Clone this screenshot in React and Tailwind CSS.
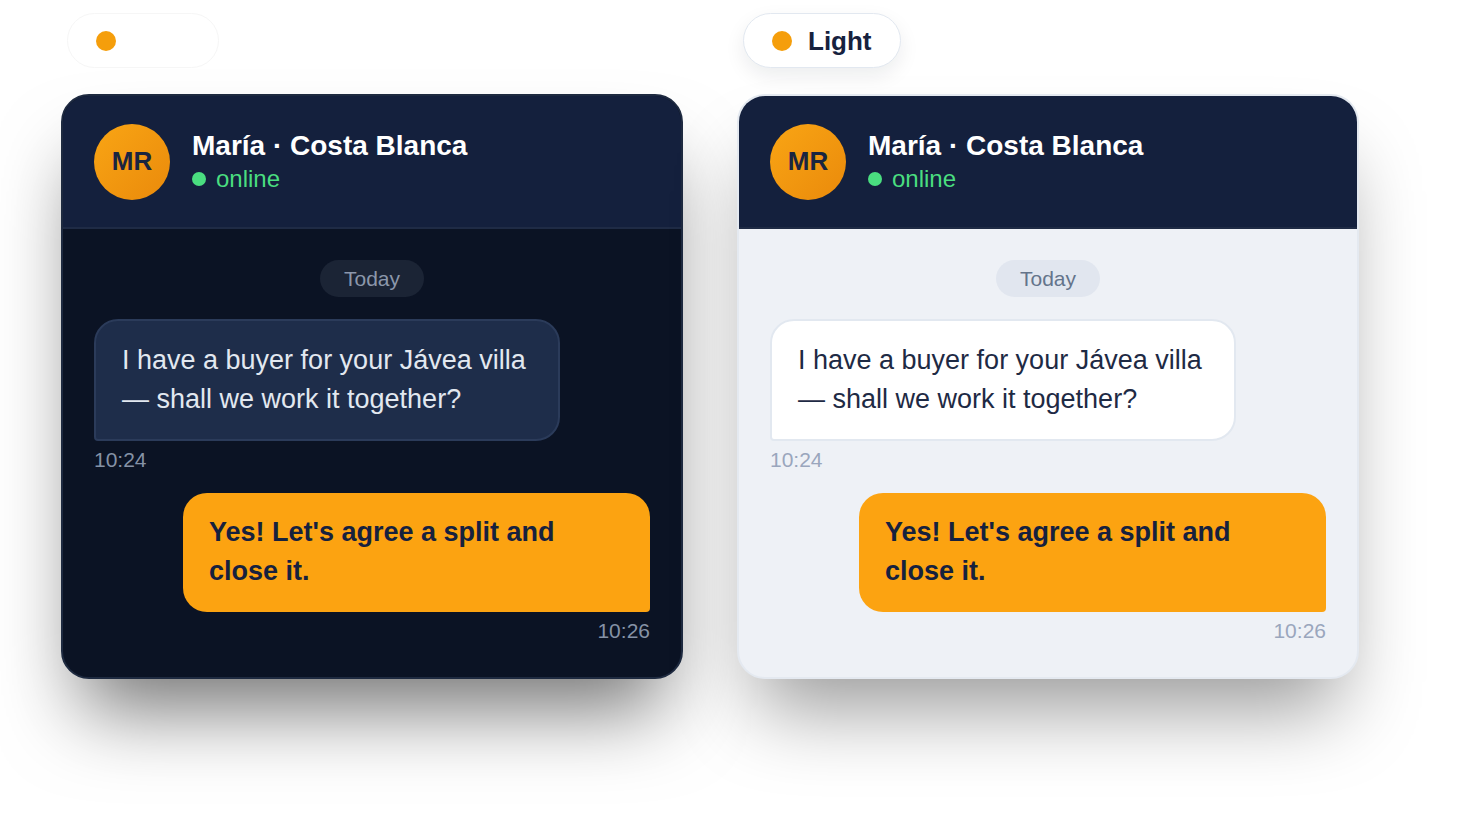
import React from "react";

const themes = {
  dark: {
    label: "Dark",
    pill: "bg-white border-[#f6f6f6] text-white",
    card: "border-2 border-[#1e2a40] bg-[#0b1324] shadow-[0_50px_80px_-20px_rgba(0,0,0,0.55)]",
    today: "bg-[#1b2435] text-[#8b97ab]",
    incoming: "bg-[#1e2d4a] border-[#2b3b5a] text-[#e2e8f0]",
    time: "text-[#8592a6]",
  },
  light: {
    label: "Light",
    pill: "bg-white border-[#e2e8f0] text-[#16213e] shadow-[0_8px_20px_rgba(15,23,42,0.08)]",
    card: "border-2 border-[#e4e9f0] bg-[#eef1f6] shadow-[0_50px_80px_-20px_rgba(0,0,0,0.4)]",
    today: "bg-[#e1e6ef] text-[#64748b]",
    incoming: "bg-white border-[#e2e8f0] text-[#1e2a44]",
    time: "text-[#9aa6bd]",
  },
};

const ChatPreview = ({ theme }) => {
  const t = themes[theme];

  return (
    <div className="flex flex-col items-start w-[622px]">
      {/* Theme pill */}
      <div className={`ml-[6px] h-[55px] flex items-center gap-4 px-7 rounded-full border ${t.pill}`}>
        <span className="w-5 h-5 rounded-full bg-[#f59e0b]" />
        <span className="text-[26px] font-bold leading-none">{t.label}</span>
      </div>

      {/* Card */}
      <div className={`mt-[26px] w-full rounded-[28px] overflow-hidden ${t.card}`}>
        {/* Header */}
        <div className="bg-[#14203d] border-b-2 border-[#1f2b45] h-[133px] px-[31px] flex items-center gap-[22px]">
          <div className="w-[76px] h-[76px] rounded-full bg-gradient-to-br from-[#f9a514] to-[#ea8a0b] flex items-center justify-center">
            <span className="text-[26px] font-bold text-[#1a2540]">MR</span>
          </div>
          <div className="flex flex-col">
            <span className="text-[28px] font-bold text-white leading-[34px]">María · Costa Blanca</span>
            <span className="flex items-center gap-[10px] text-[24px] text-[#4ade80] leading-[32px]">
              <span className="w-[14px] h-[14px] rounded-full bg-[#4ade80]" />
              online
            </span>
          </div>
        </div>

        {/* Messages */}
        <div className="px-[31px] pt-[31px] pb-[33px] flex flex-col">
          <div className="self-center">
            <span className={`inline-flex items-center h-[37px] px-6 rounded-full text-[21px] ${t.today}`}>Today</span>
          </div>

          <div className={`mt-[22px] w-[466px] rounded-[24px] rounded-bl-[4px] border-2 px-[26px] py-[20px] text-[27px] leading-[39px] ${t.incoming}`}>
            I have a buyer for your Jávea villa — shall we work it together?
          </div>
          <span className={`mt-[6px] text-[21px] leading-[26px] ${t.time}`}>10:24</span>

          <div className="mt-[20px] self-end w-[467px] rounded-[24px] rounded-br-[4px] bg-[#fca311] px-[26px] pt-[20px] pb-[21px] text-[27px] leading-[39px] font-bold text-[#16213e]">
            Yes! Let's agree a split and close it.
          </div>
          <span className={`mt-[6px] self-end text-[21px] leading-[26px] ${t.time}`}>10:26</span>
        </div>
      </div>
    </div>
  );
};

export default function App() {
  return (
    <main className="min-h-[818px] bg-white pt-[13px] pl-[61px] flex gap-[54px] font-['Liberation_Sans',Arial,sans-serif]">
      <ChatPreview theme="dark" />
      <ChatPreview theme="light" />
    </main>
  );
}
